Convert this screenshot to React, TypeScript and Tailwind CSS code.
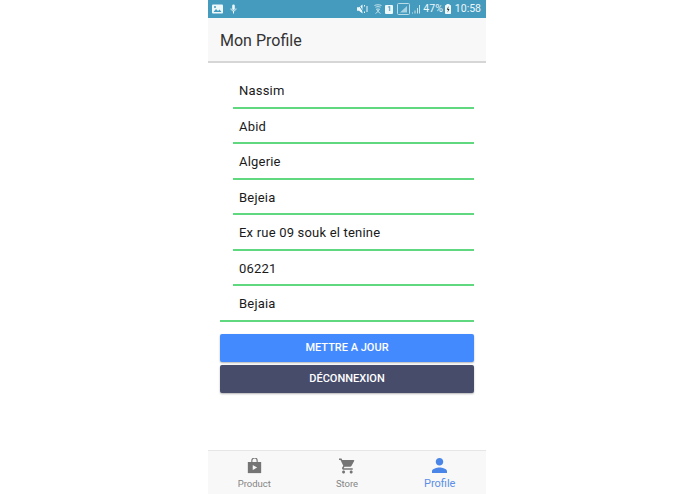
import type { ReactNode } from "react"

const fields = [
    { value: "Nassim", indent: true },
    { value: "Abid", indent: true },
    { value: "Algerie", indent: true },
    { value: "Bejeia", indent: true },
    { value: "Ex rue 09 souk el tenine", indent: true },
    { value: "06221", indent: true },
    { value: "Bejaia", indent: false },
]

function StatusBar() {
    return (
        <div className="h-[18px] bg-[#459bbd] flex items-center pl-[4px] pr-[5px] text-[#eef7fa] shrink-0">
            <svg width="11" height="10" viewBox="0 0 11 10">
                <rect x="0" y="0.5" width="11" height="9" rx="1" fill="#eef7fa" />
                <path d="M1.500 8l2.500-3 2 2 1.500-1.500L9.500 8z" fill="#459bbd" />
                <circle cx="3" cy="3" r="1" fill="#459bbd" />
            </svg>
            <svg width="7" height="10" viewBox="0 0 7 10" className="ml-[7px]">
                <rect x="2.200" y="0.500" width="2.600" height="5.500" rx="1.300" fill="#eef7fa" />
                <path d="M1 4.500c0 3.200 5 3.200 5 0M3.500 7v2.500" stroke="#eef7fa" strokeWidth="1" fill="none" />
            </svg>
            <div className="flex-1" />
            {/* mute */}
            <svg width="11" height="10" viewBox="0 0 11 10">
                <path d="M0 3.200h2L5.500 0.500v9L2 6.800H0z" fill="#eef7fa" />
                <path d="M2 1l5 8" stroke="#459bbd" strokeWidth="1" />
                <path d="M7.500 1v1.500M10 2v6M7.500 7.500V9" stroke="#eef7fa" strokeWidth="1" />
            </svg>
            {/* wifi calling */}
            <svg width="8" height="10" viewBox="0 0 8 10" className="ml-[6px]">
                <path d="M0.500 1.500c2-1 5-1 7 0M1.500 3.200c1.500-.7 3.500-.7 5 0" stroke="#d8edf3" strokeWidth="0.900" fill="none" />
                <path d="M2.500 5h3L4 7.500zM1.500 9.500l2.500-2 2.500 2" stroke="#d8edf3" strokeWidth="0.800" fill="none" />
            </svg>
            <div className="ml-[3px] w-[8px] h-[9px] rounded-[1px] bg-[#eef7fa] flex items-center justify-center text-[7px] leading-none font-bold text-[#459bbd]">
                1
            </div>
            <svg width="13" height="12" viewBox="0 0 13 12" className="ml-[4px]">
                <rect x="0.500" y="0.500" width="12" height="11" rx="1" stroke="#b9dce8" strokeWidth="1" fill="none" />
                <path d="M3 9.500L10 3v6.500z" fill="#a6d2e2" />
            </svg>
            <svg width="8" height="10" viewBox="0 0 8 10" className="ml-[2px]">
                <path d="M0.500 8.500v1M3 6.500v3M5.500 4v5.500M7.500 1v8.500" stroke="#d8edf3" strokeWidth="0.900" />
            </svg>
            <span className="ml-[3px] text-[10.500px] leading-none">47%</span>
            <svg width="6" height="10" viewBox="0 0 6 10" className="ml-[2px]">
                <rect x="0" y="1" width="6" height="9" rx="0.800" fill="#eef7fa" />
                <rect x="1.500" y="0" width="3" height="1.500" fill="#eef7fa" />
                <path d="M3.500 2L1.800 5.800h1.300L2.500 8.500l2-3.500H3.200z" fill="#222" />
            </svg>
            <span className="ml-[4px] text-[10.500px] leading-none">10:58</span>
        </div>
    )
}

function Field({ value, indent }: { value: string; indent: boolean }) {
    return (
        <div className={indent ? "ml-[25px] mr-[12px]" : "ml-[12px] mr-[12px]"}>
            <div
                className={
                    (indent ? "pl-[6px]" : "pl-[19px]") +
                    " h-[35.500px] border-b-2 border-[#5fd87f] flex items-center text-[13px] text-[#1a1a1a] tracking-[0.2px]"
                }
            >
                <span className="translate-y-[1px]">{value}</span>
            </div>
        </div>
    )
}

function NavItem({ label, active, icon }: { label: string; active?: boolean; icon: ReactNode }) {
    return (
        <div className="flex-1 flex flex-col items-center pt-[7px]">
            <div className="h-[16px] flex items-center">{icon}</div>
            <span className={active ? "text-[11px] leading-[14px] text-[#5b8fe8] mt-[3px]" : "text-[9.500px] leading-[14px] text-[#858585] mt-[3px]"}>
                {label}
            </span>
        </div>
    )
}

export default function App() {
    return (
        <div className="w-[695px] h-[494px] bg-white flex justify-center">
            <div className="w-[278px] h-[494px] flex flex-col font-['Roboto',sans-serif] bg-white mr-[1px]">
                <StatusBar />

                <div className="h-[45px] pt-[3px] bg-[#f8f8f8] border-b-2 border-[#d6d6d6] flex items-center px-[12px] text-[16px] font-normal text-[#333333] shrink-0">
                    Mon Profile
                </div>

                <div className="pt-[10px]">
                    {fields.map((f) => (
                        <Field key={f.value} value={f.value} indent={f.indent} />
                    ))}
                </div>

                <div className="flex flex-col gap-[3px] mx-[12px] mt-[12px]">
                    <button className="h-[28px] pt-[2px] bg-[#448aff] rounded-[2px] shadow-[0_1px_2px_rgba(0,0,0,0.3)] text-white text-[11px] font-medium">
                        METTRE A JOUR
                    </button>
                    <button className="h-[28px] pt-[1px] bg-[#474c6b] rounded-[2px] shadow-[0_1px_2px_rgba(0,0,0,0.3)] text-white text-[11px] font-medium">
                        DÉCONNEXION
                    </button>
                </div>

                <div className="flex-1" />

                <div className="h-[44px] bg-[#f8f8f8] border-t border-[#e6e6e6] flex shrink-0">
                    <NavItem
                        label="Product"
                        icon={
                            <svg width="15" height="16" viewBox="0 0 16 18">
                                <path d="M0.500 4.500h15V17h-15z" fill="#757575" />
                                <path d="M5 5V3a3 3 0 0 1 6 0v2" stroke="#757575" strokeWidth="1.300" fill="none" />
                                <path d="M6 8l5 2.800L6 13.500z" fill="#f8f8f8" />
                            </svg>
                        }
                    />
                    <NavItem
                        label="Store"
                        icon={
                            <svg width="16" height="16" viewBox="1 2 21 20">
                                <path
                                    fill="#757575"
                                    d="M7 18c-1.100 0-1.990.9-1.990 2S5.900 22 7 22s2-.9 2-2-.9-2-2-2zM1 2v2h2l3.600 7.590-1.350 2.450c-.16.280-.25.610-.25.960 0 1.100.9 2 2 2h12v-2H7.420c-.14 0-.25-.11-.25-.25l.03-.12.9-1.630h7.450c.75 0 1.410-.41 1.750-1.030l3.580-6.490A1 1 0 0 0 20 4H5.210l-.94-2H1zm16 16c-1.100 0-1.990.9-1.990 2s.89 2 1.990 2 2-.9 2-2-.9-2-2-2z"
                                />
                            </svg>
                        }
                    />
                    <NavItem
                        label="Profile"
                        active
                        icon={
                            <svg width="15" height="15" viewBox="4 4 16 16" className="-translate-y-[1px]">
                                <path
                                    fill="#4a86e8"
                                    d="M12 12c2.210 0 4-1.790 4-4s-1.790-4-4-4-4 1.790-4 4 1.790 4 4 4zm0 2c-2.670 0-8 1.340-8 4v2h16v-2c0-2.660-5.330-4-8-4z"
                                />
                            </svg>
                        }
                    />
                </div>
            </div>
        </div>
    )
}
